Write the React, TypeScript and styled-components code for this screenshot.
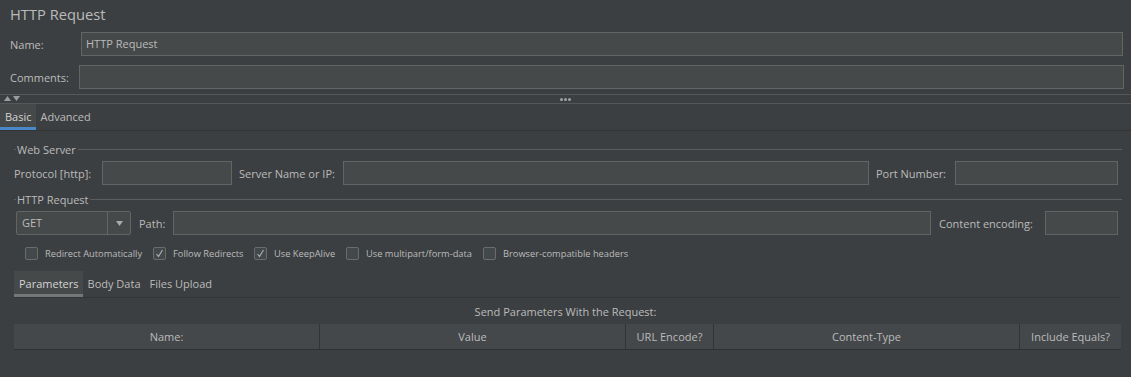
import styled, { createGlobalStyle } from 'styled-components';

const GlobalStyle = createGlobalStyle`
  html, body {
    margin: 0;
    padding: 0;
    background: #3c3f41;
    color: #bbbbbb;
    font-family: 'Open Sans', 'Noto Sans', sans-serif;
    font-size: 11px;
  }
  * { box-sizing: border-box; }
`;

const Page = styled.div`
  width: 1131px;
  height: 377px;
  overflow: hidden;
  background: #3c3f41;
`;

const Title = styled.div`
  height: 28px;
  line-height: 28px;
  padding-left: 10px;
  font-size: 14.7px;
  color: #bbbbbb;
`;

const FieldRow = styled.div<{ $top: number; $right: number }>`
  display: flex;
  align-items: center;
  margin-top: ${(p) => p.$top}px;
  padding: 0 ${(p) => p.$right}px 0 10px;
`;

const Label = styled.div<{ $w: number }>`
  flex: 0 0 ${(p) => p.$w}px;
  white-space: nowrap;
  color: #bbbbbb;
`;

const TextBox = styled.div<{ $w?: number }>`
  height: 24px;
  line-height: 22px;
  padding: 0 4px;
  background: #45494a;
  border: 1px solid #646464;
  color: #bbbbbb;
  ${(p) => (p.$w ? `flex: 0 0 ${p.$w}px;` : 'flex: 1;')}
`;

const Splitter = styled.div`
  margin-top: 5px;
  height: 10px;
  border-top: 1px solid #555758;
  border-bottom: 1px solid #555758;
  position: relative;
  display: flex;
  align-items: center;
  justify-content: center;
`;

const SplitArrows = styled.div`
  position: absolute;
  left: 4px;
  top: 1px;
  display: flex;
  gap: 2px;
`;

const Dots = styled.div`
  display: flex;
  gap: 1px;
  & span {
    width: 3px;
    height: 3px;
    border-radius: 50%;
    background: #9fa1a3;
  }
`;

const TabBar = styled.div<{ $left: number; $right: number; $top: number }>`
  display: flex;
  height: 27px;
  margin: ${(p) => p.$top}px ${(p) => p.$right}px 0 ${(p) => p.$left}px;
  border-bottom: 1px solid #323436;
`;

const Tab = styled.div<{ $active?: boolean; $accent?: string }>`
  padding: 2px 4px 0 5px;
  line-height: 21px;
  color: ${(p) => (p.$active ? '#d4d4d4' : '#bbbbbb')};
  background: ${(p) => (p.$active ? '#45494a' : 'transparent')};
  border-bottom: 3px solid ${(p) => (p.$active ? p.$accent : 'transparent')};
`;

const Legend = styled.div<{ $top: number }>`
  display: flex;
  align-items: center;
  margin: ${(p) => p.$top}px 9px 0 14px;
  height: 14px;
  &::before {
    content: '';
    width: 2px;
    border-top: 1px solid #5b5d5f;
  }
  &::after {
    content: '';
    flex: 1;
    border-top: 1px solid #5b5d5f;
  }
`;

const LegendText = styled.span`
  padding: 0 2px 0 1px;
  color: #bbbbbb;
`;

const InputRow = styled.div<{ $top: number; $left: number }>`
  display: flex;
  align-items: center;
  margin-top: ${(p) => p.$top}px;
  padding: 0 13px 0 ${(p) => p.$left}px;
`;

const Gap = styled.div<{ $w: number }>`
  flex: 0 0 ${(p) => p.$w}px;
`;

const Combo = styled.div`
  flex: 0 0 115px;
  height: 24px;
  display: flex;
  background: #45494a;
  border: 1px solid #646464;
  border-radius: 2px;
`;

const ComboValue = styled.div`
  flex: 1;
  line-height: 22px;
  padding-left: 5px;
  color: #bbbbbb;
  border-right: 1px solid #646464;
`;

const ComboArrow = styled.div`
  flex: 0 0 22px;
  display: flex;
  align-items: center;
  justify-content: center;
`;

const CheckRow = styled.div`
  display: flex;
  align-items: center;
  margin-top: 11px;
  padding-left: 25px;
  height: 14px;
`;

const CheckItem = styled.div<{ $w: number }>`
  flex: 0 0 ${(p) => p.$w}px;
  display: flex;
  align-items: center;
  font-size: 9.3px;
  color: #bbbbbb;
  white-space: nowrap;
`;

const Box = styled.div`
  width: 13px;
  height: 13px;
  margin-right: 7px;
  border: 1px solid #6b6b6b;
  border-radius: 2px;
  background: #43494a;
  display: flex;
  align-items: center;
  justify-content: center;
`;

const Caption = styled.div`
  margin-top: 4px;
  height: 20px;
  line-height: 20px;
  text-align: center;
  color: #bbbbbb;
`;

const TableHead = styled.div`
  display: grid;
  grid-template-columns: 305px 306px 88px 306px 1fr;
  margin: 2px 10px 0 14px;
  height: 26px;
  background: #45484a;
  border-bottom: 1px solid #2f3133;
`;

const HeadCell = styled.div`
  line-height: 25px;
  text-align: center;
  color: #bbbbbb;
  border-left: 1px solid #323437;
  &:first-child {
    border-left: none;
  }
`;

const Tri = ({ up, color = '#9a9c9e' }: { up?: boolean; color?: string }) => (
  <svg width="7" height="5" viewBox="0 0 7 5">
    <path d={up ? 'M0 5 L3.5 0 L7 5 Z' : 'M0 0 L7 0 L3.5 5 Z'} fill={color} />
  </svg>
);

const Check = () => (
  <svg width="9" height="9" viewBox="0 0 9 9">
    <path d="M1.5 5 L3.5 7.5 L7.5 1" fill="none" stroke="#a9abad" strokeWidth="1.2" />
  </svg>
);

const checks = [
  { label: 'Redirect Automatically', checked: false, w: 128 },
  { label: 'Follow Redirects', checked: true, w: 101 },
  { label: 'Use KeepAlive', checked: true, w: 92 },
  { label: 'Use multipart/form-data', checked: false, w: 137 },
  { label: 'Browser-compatible headers', checked: false, w: 160 },
];

const columns = ['Name:', 'Value', 'URL Encode?', 'Content-Type', 'Include Equals?'];

const App = () => {
  return (
    <Page>
      <GlobalStyle />
      <Title>HTTP Request</Title>
      <FieldRow $top={4} $right={8}>
        <Label $w={71}>Name:</Label>
        <TextBox>HTTP Request</TextBox>
      </FieldRow>
      <FieldRow $top={9} $right={7}>
        <Label $w={69}>Comments:</Label>
        <TextBox />
      </FieldRow>
      <Splitter>
        <SplitArrows>
          <Tri up />
          <Tri />
        </SplitArrows>
        <Dots>
          <span />
          <span />
          <span />
        </Dots>
      </Splitter>
      <TabBar $left={0} $right={0} $top={0}>
        <Tab $active $accent="#4a88c7">Basic</Tab>
        <Tab>Advanced</Tab>
      </TabBar>

      <Legend $top={11}>
        <LegendText>Web Server</LegendText>
      </Legend>
      <InputRow $top={5} $left={14}>
        <Label $w={88}>Protocol [http]:</Label>
        <TextBox $w={130} />
        <Gap $w={7} />
        <Label $w={104}>Server Name or IP:</Label>
        <TextBox />
        <Gap $w={7} />
        <Label $w={79}>Port Number:</Label>
        <TextBox $w={163} />
      </InputRow>

      <Legend $top={7}>
        <LegendText>HTTP Request</LegendText>
      </Legend>
      <InputRow $top={5} $left={16}>
        <Combo>
          <ComboValue>GET</ComboValue>
          <ComboArrow>
            <Tri color="#a8aaac" />
          </ComboArrow>
        </Combo>
        <Gap $w={8} />
        <Label $w={34}>Path:</Label>
        <TextBox />
        <Gap $w={8} />
        <Label $w={106}>Content encoding:</Label>
        <TextBox $w={73} />
      </InputRow>

      <CheckRow>
        {checks.map((c) => (
          <CheckItem key={c.label} $w={c.w}>
            <Box>{c.checked && <Check />}</Box>
            {c.label}
          </CheckItem>
        ))}
      </CheckRow>

      <TabBar $left={14} $right={10} $top={11}>
        <Tab $active $accent="#74777a">Parameters</Tab>
        <Tab>Body Data</Tab>
        <Tab>Files Upload</Tab>
      </TabBar>
      <Caption>Send Parameters With the Request:</Caption>
      <TableHead>
        {columns.map((c) => (
          <HeadCell key={c}>{c}</HeadCell>
        ))}
      </TableHead>
    </Page>
  );
};

export default App;
